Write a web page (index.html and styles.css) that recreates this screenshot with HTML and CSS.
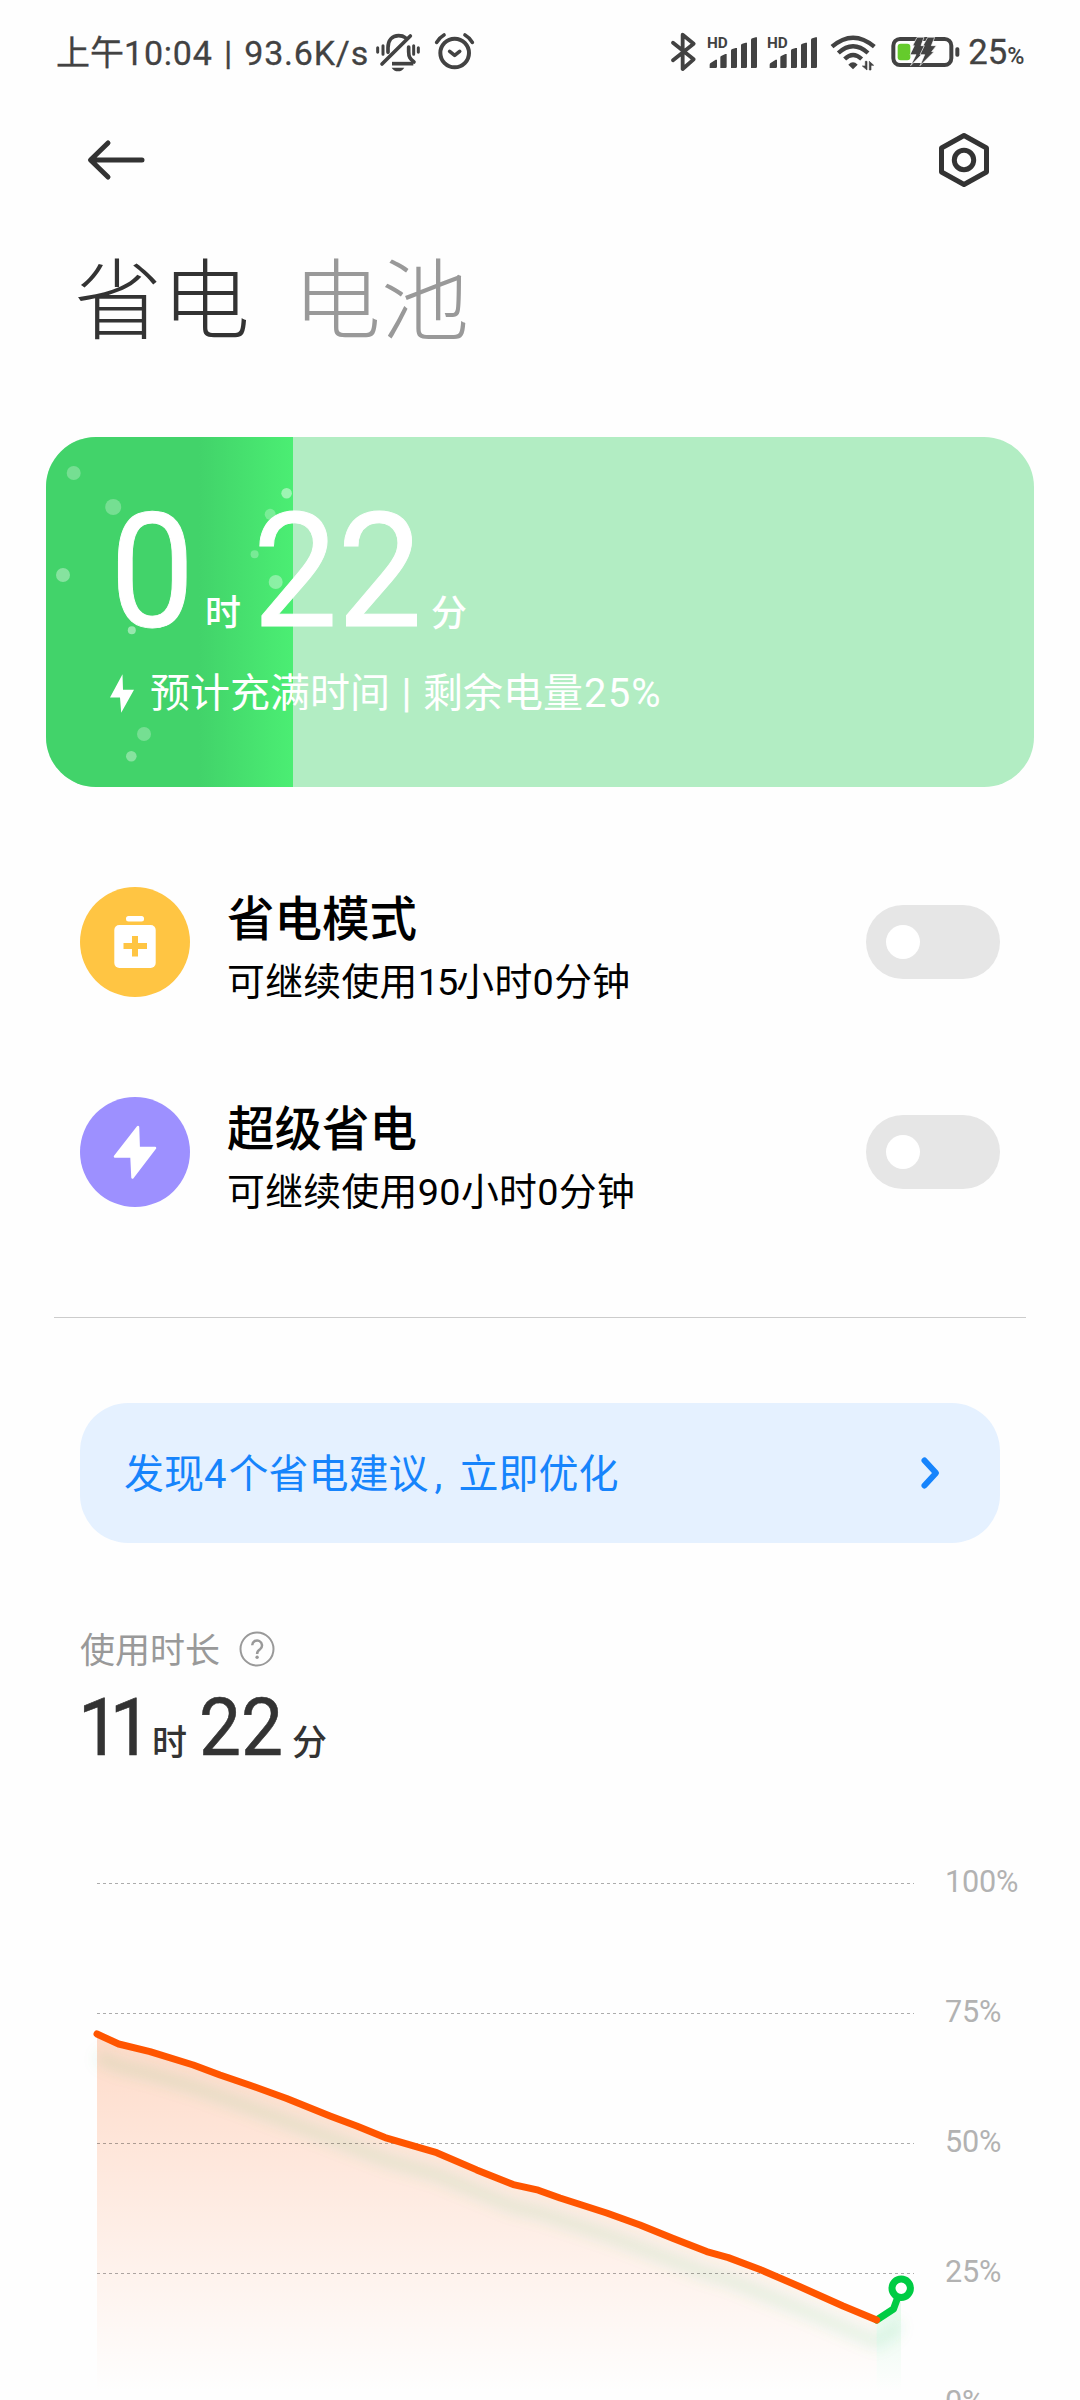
FILE: index.html
```html
<!DOCTYPE html>
<html lang="zh-CN">
<head>
<meta charset="utf-8">
<title>省电与电池</title>
<link rel="stylesheet" href="styles.css">
</head>
<body>
<div class="screen">
  <header class="status">
    <div class="status-left">
      <span class="status-text"><span class="ampm">上午</span>10:04 | 93.6K/s</span>
      <svg class="bell" viewBox="1008 40 132 116" width="44" height="38.67">
        <g fill="none" stroke="#424242" stroke-width="11" stroke-linecap="round">
          <path d="M1044 98V84c0-22 12-36 32-36 8 0 15 2 20 6"/>
          <path d="M1111 49 1026 133"/>
          <path d="M1106 82v14c0 16 4 22 16 31"/>
          <path d="M1056 132h64" stroke-linecap="butt"/>
          <path d="M1013 84v14M1029 78v26M1121 78v26M1135 84v14" stroke-width="9"/>
        </g>
        <path d="M1055 144h38c-4 7-11 11-19 11s-15-4-19-11z" fill="#424242"/>
      </svg>
      <svg class="alarm" viewBox="1185 40 117 110" width="39" height="36.67">
        <g fill="none" stroke="#424242" stroke-linecap="round" stroke-linejoin="round">
          <circle cx="1244" cy="100" r="43" stroke-width="12"/>
          <path d="M1229 95l15 12 15-12" stroke-width="11"/>
          <path d="M1190 68q8-14 22-22M1297 68q-8-14-22-22" stroke-width="11"/>
        </g>
      </svg>
    </div>
    <div class="status-right">
      <svg viewBox="62 36 1062 120" width="354" height="40">
        <path d="M68 68 130 118 97 147V44l33 27L68 121" fill="none" stroke="#424242" stroke-width="11.500" stroke-linejoin="round" stroke-linecap="round"/>
        <g id="signal">
          <text x="170" y="84" class="hd">HD</text>
          <g fill="#424242">
            <path d="M178 144v-10q0-4 4-6l14-9h4v21q0 4-4 4z"/>
            <path d="M210 144v-32q0-4 4-5l11-5h4v38q0 4-4 4z"/>
            <path d="M242 144V92q0-4 4-5l10-3h4v56q0 4-4 4z"/>
            <path d="M272 144V76q0-4 4-5l10-3h4v72q0 4-4 4z"/>
            <path d="M302 144V60q0-4 4-5l10-3h4v88q0 4-4 4z"/>
          </g>
        </g>
        <use href="#signal" x="180"/>
        <g fill="none" stroke="#424242" stroke-width="13">
          <path d="M545 80Q608 26 672 80"/>
          <path d="M564 99q44-40 89 0"/>
          <path d="M583 117q25-24 51 0"/>
        </g>
        <path d="M594 134q14-14 28 0l-14 14z" fill="#424242"/>
        <path d="M650 124v26l-14-12h9v-14zM657 150v-26l13 12h-8v14z" fill="#424242" stroke="#424242" stroke-width="2"/>
        <rect x="729" y="57" width="174" height="78" rx="20" fill="none" stroke="#424242" stroke-width="12"/>
        <rect x="915" y="82" width="12" height="28" rx="5" fill="#424242"/>
        <rect x="742" y="71" width="38" height="50" rx="9" fill="#65cb2c"/>
        <g fill="#424242" stroke="#fefefe" stroke-width="2">
          <path d="M800 52h21l-9 25h13l-8 14h9l-45 46 16-33h-18l13-27h-5z"/>
          <path d="M832 52h21l-10 25h15l-14 18h7l-42 42 14-33h-14l13-27h-4z"/>
        </g>
        <text x="954" y="132" class="level">25</text>
        <text x="1071" y="132" class="percent">%</text>
      </svg>
    </div>
  </header>

  <nav class="toolbar">
    <svg width="60" height="40" viewBox="0 0 60 40"><path d="M21 3 3.500 20 21 37M4 20h51" fill="none" stroke="#333" stroke-width="5" stroke-linecap="round" stroke-linejoin="round"/></svg>
    <svg width="54" height="58" viewBox="-27 -29 54 58"><g fill="none" stroke="#333" stroke-width="5"><path d="M0-24.500 22.500-12V12L0 24.500-22.500 12V-12z" stroke-linejoin="round"/><circle r="9.700"/></g></svg>
  </nav>

  <div class="tabs"><span class="tab active">省电</span><span class="tab">电池</span></div>

  <section class="card">
    <div class="fill">
      <svg width="247" height="350" viewBox="46 437 247 350" fill="#fff">
        <g fill-opacity=".27"><circle cx="73.700" cy="473" r="7"/><circle cx="113.200" cy="507" r="8"/><circle cx="270.200" cy="514.300" r="5.500"/><circle cx="254.600" cy="554.300" r="4"/><circle cx="144" cy="734" r="7"/></g>
        <g fill-opacity=".36"><circle cx="63" cy="575" r="7"/><circle cx="275.700" cy="582" r="7"/><circle cx="131.300" cy="756.300" r="5.300"/></g>
        <g fill-opacity=".46"><circle cx="131.800" cy="630.300" r="4"/><circle cx="286.600" cy="493.300" r="5.300"/></g>
      </svg>
    </div>
    <div class="card-body">
      <div class="big"><span class="num first">0</span><span class="unit">时</span><span class="num second">22</span><span class="unit last">分</span></div>
      <div class="estimate">
        <svg width="24" height="39" viewBox="110 672 24 39"><path d="M122.500 672.300 123 687.700H134L121.200 710.700 120 695.500H110z" fill="#fff"/></svg>
        <span class="estimate-text">预计充满时间<span class="bar">|</span>剩余电量<span class="pct">25%</span></span>
      </div>
    </div>
  </section>

  <section class="modes">
    <div class="mode">
      <div class="badge saver">
        <svg width="110" height="110"><rect x="46" y="29" width="18" height="5.500" rx="2.500" fill="#fff"/><rect x="34.300" y="38" width="41.400" height="43" rx="5" fill="#fff"/><path d="M55 49v20.500M43.500 59H67" stroke="#ffc543" stroke-width="6"/></svg>
      </div>
      <div class="mode-text"><div class="mode-name">省电模式</div><div class="mode-desc">可继续使用<span class="fifteen">15</span>小时0分钟</div></div>
      <div class="toggle"><i></i></div>
    </div>
    <div class="mode">
      <div class="badge ultra">
        <svg width="110" height="110"><path d="M58 30 58.700 51H75L52.500 80.500 51.500 59.500H35z" fill="#fff" stroke="#fff" stroke-width="2.500" stroke-linejoin="round"/></svg>
      </div>
      <div class="mode-text"><div class="mode-name">超级省电</div><div class="mode-desc">可继续使用90小时0分钟</div></div>
      <div class="toggle"><i></i></div>
    </div>
  </section>

  <hr class="divider">

  <div class="advice">
    <span class="advice-text">发现<span class="count">4</span>个省电建议<span class="comma">,</span>立即优化</span>
    <svg width="22" height="34" viewBox="0 0 22 34"><path d="M4.500 4.500 16 17 4.500 29.500" fill="none" stroke="#1684fc" stroke-width="6" stroke-linecap="round" stroke-linejoin="round"/></svg>
  </div>

  <section class="usage">
    <div class="usage-label"><span class="usage-name">使用时长</span>
      <svg width="36" height="36" viewBox="0 0 36 36"><g fill="none" stroke="#999"><circle cx="18" cy="18" r="16.500" stroke-width="2"/><path d="M13.200 14.300a4.900 4.900 0 1 1 7.800 4q-2.900 2-2.900 4.700" stroke-width="2.500"/></g><circle cx="18.100" cy="26.300" r="1.700" fill="#999"/></svg>
    </div>
    <div class="usage-time"><span class="unum ones">11</span><span class="uunit">时</span><span class="unum twos">22</span><span class="uunit end">分</span></div>
  </section>

  <section class="chart">
    <svg class="plot" width="850" height="540" viewBox="80 1860 850 540">
      <defs>
        <linearGradient id="heat" gradientUnits="userSpaceOnUse" x1="0" y1="2034" x2="0" y2="2392"><stop offset="0" stop-color="#ff5500" stop-opacity=".21"/><stop offset=".66" stop-color="#ff5500" stop-opacity=".07"/><stop offset="1" stop-color="#ff5500" stop-opacity="0"/></linearGradient>
        <linearGradient id="charge" gradientUnits="userSpaceOnUse" x1="0" y1="2290" x2="0" y2="2392"><stop offset="0" stop-color="#00cc44" stop-opacity=".1"/><stop offset="1" stop-color="#00cc44" stop-opacity="0"/></linearGradient>
        <filter id="soft" filterUnits="userSpaceOnUse" x="80" y="2000" width="850" height="400"><feGaussianBlur stdDeviation="7"/></filter>
      </defs>
      <path fill="url(#heat)" d="M97 2034 118.700 2044 150 2051.700 193.300 2065 250 2085.700 286.700 2098.700 330 2115.900 385 2137.600 436.700 2152.700 476.700 2169.900 513.300 2184.600 538.300 2190.200 560 2198 606.700 2213 640 2225 706.700 2251.600 728.300 2257.600 760 2269.500 800 2286.700 843 2306 876.700 2320V2400H97z"/>
      <path fill="url(#charge)" d="M876.700 2320 893.500 2309 901 2288V2400H876.700z"/>
      <path filter="url(#soft)" transform="translate(0 22)" fill="none" stroke="#00b050" stroke-opacity=".095" stroke-width="14" d="M97 2034 118.700 2044 150 2051.700 193.300 2065 250 2085.700 330 2115.900 385 2137.600 436.700 2152.700 513.300 2184.600 538.300 2190.200 606.700 2213 706.700 2251.600 728.300 2257.600 800 2286.700 876.700 2320 893.500 2309 897 2299"/>
      <path d="M97 1883.500H914M97 2013.500H914M97 2143.500H914M97 2273.500H914" stroke="#000" stroke-opacity=".32" stroke-width="1" stroke-dasharray="3 3"/>
      <g fill="none" stroke-width="7" stroke-linecap="round" stroke-linejoin="round">
        <path stroke="#00cc44" d="M876.700 2320 893.500 2309 899 2294"/>
        <path stroke="#ff5500" d="M97 2034 118.700 2044 150 2051.700 193.300 2065 220 2075 250 2085.200 286.700 2098.500 330 2115.900 356.700 2126 385 2137.600 436.700 2152.700 476.700 2169.900 513.300 2184.600 538.300 2190.200 560 2198 606.700 2213 640 2225 673.300 2238.600 706.700 2251.600 728.300 2257.600 760 2269.500 800 2286.700 843 2306 876.700 2320"/>
      </g>
      <circle cx="901.200" cy="2288.300" r="9.200" fill="#fff" stroke="#00cc44" stroke-width="7"/>
    </svg>
    <div class="axis"><span>100%</span><span>75%</span><span>50%</span><span>25%</span><span>0%</span></div>
  </section>
</div>
</body>
</html>
```
FILE: styles.css
```css
* { box-sizing: border-box; }
body { margin: 0; background: #fefefe; }
svg { display: block; flex: none; overflow: visible; }
.screen {
  width: 1080px; height: 2400px; overflow: hidden;
  display: flex; flex-direction: column;
  background: #fefefe; color: #333;
  font-family: Roboto, "Noto Sans CJK SC", sans-serif;
}
.status { height: 104px; flex: none; display: flex; justify-content: space-between; padding: 0 55px 0 56px; color: #424242; }
.status-left { display: flex; }
.status-text { width: 320px; padding-top: 23px; font-size: 34px; line-height: 60px; font-weight: 400; letter-spacing: .8px; word-spacing: 2px; white-space: nowrap; -webkit-text-stroke: .3px #424242; }
.ampm { letter-spacing: 0; }
.bell { margin-top: 33px; }
.alarm { margin: 33px 0 0 15px; }
.status-right { padding-top: 32px; }
.hd { font-size: 46px; font-weight: 700; fill: #424242; }
.level { font-size: 104px; letter-spacing: 0; fill: #424242; stroke: #424242; stroke-width: 1px; }
.percent { font-size: 70px; fill: #424242; font-weight: 500; }

.toolbar { height: 112px; flex: none; display: flex; justify-content: space-between; align-items: center; padding: 0 89px 0 87px; }

.tabs { height: 221px; flex: none; display: flex; gap: 43px; padding: 18px 0 0 74px; }
.tab { font-family: "Noto Sans CJK SC", sans-serif; font-size: 88px; line-height: 120px; font-weight: 300; color: #999; }
.tab.active { color: #333; }

.card { position: relative; height: 350px; flex: none; margin: 0 46px; border-radius: 50px; overflow: hidden; background: #b2edc3; color: #fff; }
.fill { position: absolute; left: 0; top: 0; width: 25%; height: 100%; background: linear-gradient(90deg, #42d36a 0, #42d36a 62%, #4bee73 100%); }
.card-body { position: relative; padding: 75px 0 0 62px; }
.big { display: flex; align-items: baseline; height: 120px; }
.num { width: 85px; font-size: 160px; line-height: 120px; transform: scaleX(.94); transform-origin: left; -webkit-text-stroke: 1px #fff; }
.num.first { width: 83px; margin-left: 2px; }
.unit { font-size: 36px; line-height: 40px; font-weight: 500; margin-left: 12px; }
.num.second { width: 170px; margin-left: 12px; }
.unit.last { margin-left: 8px; }
.estimate { display: flex; align-items: center; gap: 16px; margin-top: 31px; padding-left: 2px; font-size: 40px; line-height: 60px; }
.estimate-text { white-space: nowrap; padding-top: 1px; }
.bar { display: inline-block; width: 33px; text-align: center; font-weight: 500; }
.pct { letter-spacing: 1.2px; margin-left: 1px; }

.modes { flex: none; padding: 100px 80px 0; display: flex; flex-direction: column; gap: 100px; }
.mode { display: flex; align-items: center; height: 110px; color: #000; }
.badge { width: 110px; height: 110px; border-radius: 50%; }
.saver { background: #ffc543; }
.ultra { background: #9d90ff; }
.mode-text { flex: 1; height: 110px; padding: 3px 0 0 37px; }
.mode-name { font-size: 47.5px; line-height: 60px; font-weight: 500; }
.mode-desc { font-size: 37.8px; line-height: 50px; margin-top: 7px; letter-spacing: .35px; white-space: nowrap; }
.fifteen { letter-spacing: -2px; }
.toggle { width: 134px; height: 74px; border-radius: 37px; background: #e6e6e6; padding: 20px; }
.toggle i { display: block; width: 34px; height: 34px; border-radius: 50%; background: #fff; }

.divider { flex: none; width: 972px; height: 1px; margin: 110px 54px 0; border: 0; background: #ccc; }

.advice { flex: none; height: 140px; margin: 85px 80px 0; padding: 0 58px 0 44px; border-radius: 48px; background: #e5f1ff; color: #1684fc; display: flex; align-items: center; justify-content: space-between; font-size: 40px; line-height: 60px; }
.advice-text { padding-top: 4px; }
.count { letter-spacing: 2px; }
.comma { display: inline-block; width: 30px; padding-left: 6px; }

.usage { flex: none; padding: 76px 80px 0; }
.usage-label { display: flex; align-items: center; gap: 19px; height: 60px; font-size: 35px; line-height: 60px; color: #999; }
.usage-name { padding-top: 5px; }
.usage-time { display: flex; align-items: baseline; height: 80px; margin-top: 9px; }
.unum { font-size: 79.5px; line-height: 80px; transform: scaleX(.94); transform-origin: left; -webkit-text-stroke: .6px #333; }
.ones { width: 71px; letter-spacing: -11px; margin-left: -2px; }
.uunit { font-size: 35px; line-height: 40px; font-weight: 500; margin-left: 3px; }
.twos { width: 84px; margin-left: 12px; }
.uunit.end { margin-left: 9px; }

.chart { flex: none; height: 540px; margin-top: 92px; padding-left: 80px; display: flex; gap: 15px; }
.axis { display: flex; flex-direction: column; font-size: 30.6px; line-height: 40px; letter-spacing: -.2px; gap: 90px; padding-top: 2px; color: #b2b2b2; }
```
